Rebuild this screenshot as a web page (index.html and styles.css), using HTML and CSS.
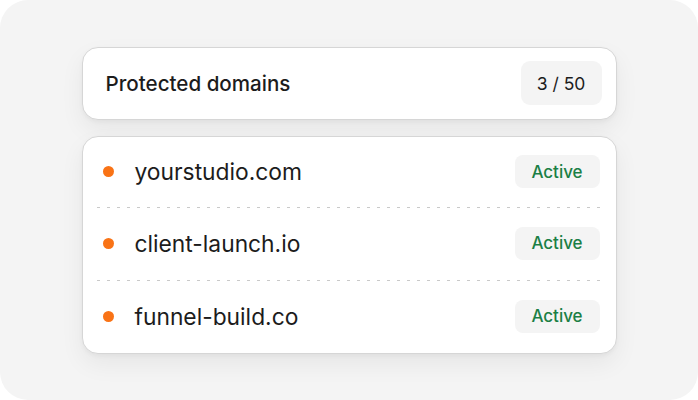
FILE: index.html
```html
<!doctype html>
<html lang="en">
<head>
    <meta charset="UTF-8">
    <meta name="viewport" content="width=device-width, initial-scale=1.0">
    <title>Protected domains</title>
    <link rel="stylesheet" href="styles.css">
</head>
<body>
    <div class="frame">
        <div class="stack">
            <div class="card head">
                <span class="title">Protected domains</span>
                <span class="count">3 / 50</span>
            </div>
            <ul class="card list">
                <li>
                    <i class="dot"></i>
                    <span class="domain">yourstudio.com</span>
                    <span class="status">Active</span>
                </li>
                <li>
                    <i class="dot"></i>
                    <span class="domain">client-launch.io</span>
                    <span class="status">Active</span>
                </li>
                <li>
                    <i class="dot"></i>
                    <span class="domain">funnel-build.co</span>
                    <span class="status">Active</span>
                </li>
            </ul>
        </div>
    </div>
</body>
</html>
```

FILE: styles.css
```css
*{
    margin: 0;
    padding: 0;
    box-sizing: border-box;
}
html,body{
    width: 100%;
    height: 100%;
    background: #fff;
    overflow: hidden;
}
body{
    font-family: Inter, "Noto Sans", sans-serif;
    color: #1c1c1c;
}
.frame{
    display: flex;
    align-items: center;
    justify-content: center;
    width: 698px;
    height: 400px;
    background: #f4f4f4;
    border-radius: 28px;
}
.stack{
    display: flex;
    flex-direction: column;
    gap: 16px;
    width: 535px;
}
.card{
    background: #fff;
    border: 1px solid #d6d6d6;
    border-radius: 16px;
    box-shadow: 0 10px 24px rgba(0,0,0,0.06), 0 2px 4px rgba(0,0,0,0.04);
}
.head{
    display: flex;
    align-items: center;
    justify-content: space-between;
    height: 73px;
    padding: 0 14px 0 23px;
}
.head .title{
    font-size: 20.6px;
    font-weight: 500;
}
.head .count{
    display: flex;
    align-items: center;
    justify-content: center;
    width: 81px;
    height: 44px;
    background: #f4f4f4;
    border-radius: 9px;
    font-size: 17.5px;
}
.list{
    list-style-type: none;
    padding: 0 10px 0 12px;
}
.list li{
    display: flex;
    align-items: center;
    height: 72px;
    padding: 0 6px 0 8px;
}
.list li:first-child{
    height: 70px;
}
.list li + li{
    height: 73px;
    background-image: linear-gradient(to right, #c9c9c9 3px, transparent 3px);
    background-size: 10px 1px;
    background-repeat: repeat-x;
    background-position: 2px 0;
}
.dot{
    flex-shrink: 0;
    width: 11px;
    height: 11px;
    border-radius: 50%;
    background: #f97316;
}
.domain{
    flex: 1;
    margin-left: 21px;
    font-size: 22.8px;
}
.status{
    display: flex;
    align-items: center;
    justify-content: center;
    width: 85px;
    height: 33px;
    background: #f4f4f4;
    border-radius: 8px;
    color: #1b7f45;
    font-size: 17px;
    font-weight: 500;
}
```
